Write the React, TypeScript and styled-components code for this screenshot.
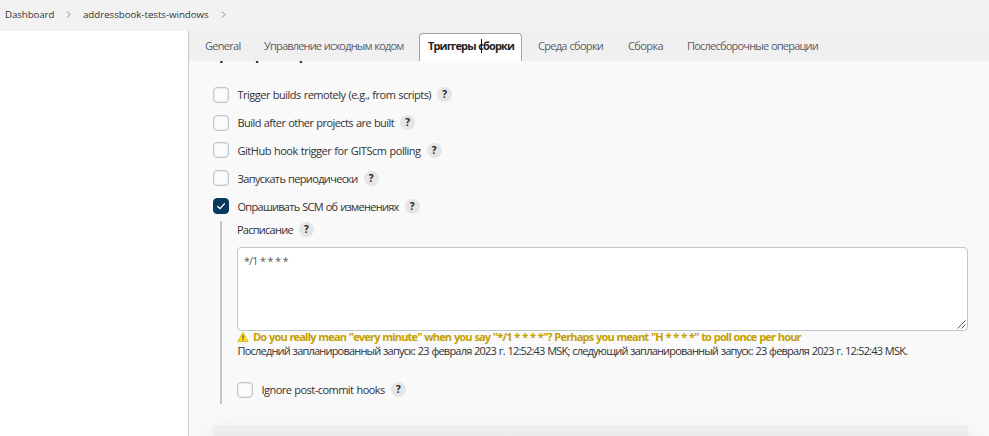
import React from "react";
import styled, { createGlobalStyle } from "styled-components";

const Global = createGlobalStyle`
  * { box-sizing: border-box; }
  html, body { margin: 0; padding: 0; overflow: hidden; }
  body { font-family: "Open Sans", "Noto Sans", sans-serif; font-size: 11px; color: #333; background: #fff; }
`;

const Page = styled.div`
  width: 989px;
  height: 436px;
  display: flex;
  flex-direction: column;
  overflow: hidden;
`;

const Breadcrumbs = styled.header`
  height: 31px;
  flex: none;
  display: flex;
  align-items: center;
  padding: 0 0 2px 5px;
  background: #f2f2f2;
`;

const Text = styled.span<{ $ls?: number; $ws?: number }>`
  display: block;
  white-space: pre;
  letter-spacing: ${(p) => p.$ls ?? 0}px;
  word-spacing: ${(p) => p.$ws ?? 0.6}px;
`;

const Crumb = styled(Text)<{ $w: number }>`
  width: ${(p) => p.$w}px;
  font-size: 9.75px;
  font-weight: 500;
  color: #333;
`;

const Chevron = styled.svg`
  flex: none;
  width: 5px;
  height: 7px;
  fill: none;
  stroke: #8a8a8a;
  stroke-width: 1;
`;

const Gap = styled.div<{ $w: number }>`
  flex: none;
  width: ${(p) => p.$w}px;
`;

const Body = styled.div`
  flex: 1;
  min-height: 0;
  display: flex;
`;

const Side = styled.aside`
  width: 189px;
  flex: none;
  background: #fff;
  border-right: 1px solid #c0cbd1;
`;

const Main = styled.main`
  flex: 1;
  min-width: 0;
  display: flex;
  flex-direction: column;
  background: #f9f9f9;
`;

const Tabs = styled.nav`
  height: 30px;
  flex: none;
  display: flex;
  align-items: flex-end;
  background: #f0f0f0;
`;

const Tab = styled.div<{ $w: number; $active?: boolean }>`
  position: relative;
  width: ${(p) => p.$w}px;
  height: 28px;
  flex: none;
  margin-right: ${(p) => (p.$active ? 5 : 0)}px;
  padding: 4px 0 0 ${(p) => (p.$active ? 8 : 10)}px;
  line-height: 16px;
  color: ${(p) => (p.$active ? "#222" : "#5a5d68")};
  font-weight: ${(p) => (p.$active ? 700 : 400)};
  background: ${(p) => (p.$active ? "#fff" : "transparent")};
  border: 1px solid ${(p) => (p.$active ? "#98a5b0" : "transparent")};
  border-bottom: 0;
  border-radius: 4px 4px 0 0;
`;

const Caret = styled.i`
  position: absolute;
  left: 61px;
  top: 5px;
  width: 1px;
  height: 14px;
  background: #111;
`;

const Content = styled.section`
  flex: 1;
  min-height: 0;
  padding: 0 21px 0 24px;
  display: flex;
  flex-direction: column;
  overflow: hidden;
`;

const Heading = styled.h2`
  margin: -16px 0 0 -1px;
  height: 36px;
  flex: none;
  font-size: 13.5px;
  font-weight: 700;
  line-height: 20px;
  color: #222;
`;

const Row = styled.label<{ $h?: number }>`
  height: ${(p) => p.$h ?? 27.8}px;
  flex: none;
  display: flex;
  align-items: center;
`;

const Box = styled.span<{ $on?: boolean }>`
  width: 16px;
  height: 16px;
  flex: none;
  margin-right: 8.5px;
  display: flex;
  align-items: center;
  justify-content: center;
  border: 1px solid ${(p) => (p.$on ? "#063a5d" : "#bcc8cf")};
  border-radius: 4px;
  background: ${(p) => (p.$on ? "#063a5d" : "#fbfbfb")};
  box-shadow: inset 0 0 0 0.5px ${(p) => (p.$on ? "#063a5d" : "#d3dce1")};
`;

const Help = styled.span`
  width: 15px;
  height: 15px;
  flex: none;
  margin-left: 6px;
  border-radius: 50%;
  background: #e5e5e5;
  color: #222;
  font: 700 10px/15px "Open Sans", sans-serif;
  text-align: center;
`;

const Nested = styled.div`
  height: 183px;
  flex: none;
  margin: 1px 0 0 7px;
  padding-left: 15px;
  border-left: 2px solid #bcc8cf;
`;

const Area = styled.div`
  position: relative;
  width: 731px;
  height: 84px;
  margin-top: 9px;
  padding: 6px 6px;
  font-size: 10.5px;
  line-height: 14px;
  color: #555;
  background: #fff;
  border: 1px solid #bcc8cf;
  border-radius: 4px;
`;

const Grip = styled.svg`
  position: absolute;
  right: 1px;
  bottom: 1px;
  width: 9px;
  height: 9px;
  stroke: #555;
  fill: none;
`;

const Warning = styled.div`
  height: 13px;
  display: flex;
  align-items: center;
  font-weight: 700;
  line-height: 13px;
  color: #c4a000;
  padding-bottom: 1px;
`;

const WarnIcon = styled.svg`
  width: 12px;
  height: 12px;
  flex: none;
  margin-right: 4px;
`;

const Info = styled.div`
  height: 14px;
  line-height: 14px;
  color: #333;
  padding-left: 0.5px;
  margin-bottom: 24px;
`;

const Sticky = styled.footer`
  flex: none;
  height: 10px;
  margin: 22px 0 0;
  background: linear-gradient(#f1f1f1, #ebebeb);
  border-top: 1px solid #eaeaea;
  box-shadow: 0 10px 20px 4px rgba(0, 0, 0, 0.07);
`;

const Check = () => (
  <svg width="10" height="10" viewBox="0 0 10 10" fill="none" stroke="#fff" strokeWidth="1.4">
    <path d="M1.4 5.2 L4 7.6 L8.8 2.4" />
  </svg>
);

const Arrow = () => (
  <Chevron viewBox="0 0 5 7">
    <path d="M1 .5 L4 3.5 L1 6.5" />
  </Chevron>
);

const triggers = [
  { label: "Trigger builds remotely (e.g., from scripts)", ls: -0.51 },
  { label: "Build after other projects are built", ls: -0.56 },
  { label: "GitHub hook trigger for GITScm polling", ls: -0.47 },
  { label: "Запускать периодически", ls: -0.65 },
  { label: "Опрашивать SCM об изменениях", ls: -0.71 },
];

const checked = "Опрашивать SCM об изменениях";

const tabs = [
  { label: "General", w: 59, ls: -0.72 },
  { label: "Управление исходным кодом", w: 166, ls: -0.82 },
  { label: "Триггеры сборки", w: 103, ls: -0.87, active: true },
  { label: "Среда сборки", w: 90, ls: -0.7 },
  { label: "Сборка", w: 59, ls: -0.6 },
  { label: "Послесборочные операции", w: 150, ls: -0.79 },
];

export default function App() {
  return (
    <>
      <Global />
      <Page>
        <Breadcrumbs>
          <Crumb $w={61} $ls={-0.12}>Dashboard</Crumb>
          <Arrow />
          <Gap $w={12} />
          <Crumb $w={138} $ls={-0.05}>addressbook-tests-windows</Crumb>
          <Arrow />
        </Breadcrumbs>
        <Body>
          <Side />
          <Main>
            <Tabs>
              <Gap $w={5} />
              {tabs.map((t) => (
                <Tab key={t.label} $w={t.w} $active={t.active}>
                  <Text $ls={t.ls}>{t.label}</Text>
                  {t.active && <Caret />}
                </Tab>
              ))}
            </Tabs>
            <Content>
              <Heading>
                <Text $ls={-0.68}>Триггеры сборки</Text>
              </Heading>
              {triggers.map((t) => (
                <Row key={t.label}>
                  <Box $on={t.label === checked}>{t.label === checked && <Check />}</Box>
                  <Text $ls={t.ls}>{t.label}</Text>
                  <Help>?</Help>
                </Row>
              ))}
              <Nested>
                <Row $h={17}>
                  <Text $ls={-0.75}>Расписание</Text>
                  <Help>?</Help>
                </Row>
                <Area>
                  <Text $ls={-0.75} $ws={0.6}>*/1 * * * *</Text>
                  <Grip viewBox="0 0 9 9">
                    <path d="M.5 8.5 L8.5 .5 M4.5 8.5 L8.5 4.5" />
                  </Grip>
                </Area>
                <Warning>
                  <WarnIcon viewBox="0 0 12 12">
                    <path d="M6 1.2 L11.2 10.6 H.8 Z" fill="#fce21c" stroke="#d8b400" strokeWidth=".8" strokeLinejoin="round" />
                    <path d="M6 4.3 V7.4 M6 8.3 V9.5" stroke="#444" strokeWidth="1.2" />
                  </WarnIcon>
                  <Text $ls={-0.82}>
                    {'Do you really mean "every minute" when you say "*/1 * * * *"? Perhaps you meant "H * * * *" to poll once per hour'}
                  </Text>
                </Warning>
                <Info>
                  <Text $ls={-0.797}>
                    Последний запланированный запуск: 23 февраля 2023 г. 12:52:43 MSK; следующий запланированный запуск: 23 февраля 2023 г. 12:52:43 MSK.
                  </Text>
                </Info>
                <Row $h={16}>
                  <Box />
                  <Text $ls={-0.53}>Ignore post-commit hooks</Text>
                  <Help>?</Help>
                </Row>
              </Nested>
              <Sticky />
            </Content>
          </Main>
        </Body>
      </Page>
    </>
  );
}
